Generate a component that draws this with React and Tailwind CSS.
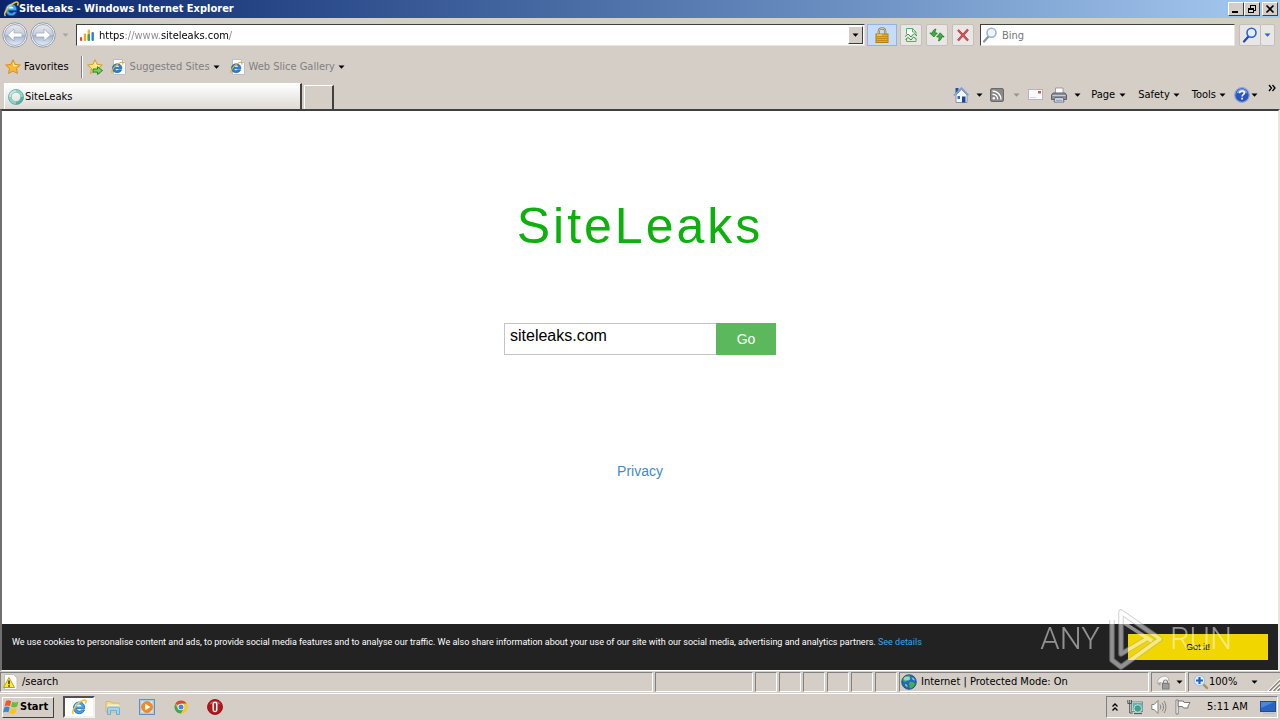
import React, { useState } from 'react';

// ────────────────────────────────────────────────────────────
// Icons
// ────────────────────────────────────────────────────────────
const IeIcon = ({ className = 'w-4 h-4' }) => (
  <svg className={`${className} shrink-0`} viewBox="0 0 16 16">
    <path d="M13.6 9.6H5.6c.1 1.500 1.200 2.500 2.700 2.500 1 0 1.800-.4 2.300-1.200h3c-.8 2.300-2.800 3.800-5.400 3.800-3.300 0-5.700-2.300-5.700-5.600C2.500 5.500 4.800 3 8.100 3c3.600 0 5.900 2.600 5.500 6.600z" fill="#3fa3ea" stroke="#1457a8" strokeWidth=".7" />
    <path d="M5.600 7.600h5c-.1-1.300-1.100-2.200-2.500-2.200s-2.300.9-2.500 2.200z" fill="#e8f5ff" />
    <path d="M2.500 15C.5 13.500 2.800 8.300 7 4.600 10.500 1.500 14 .3 14.900 1.600c.4.800.1 2-.5 3.100" fill="none" stroke="#f2c230" strokeWidth="1.500" />
    <path d="M4.200 7c.6-1.900 2-3 4-3.200" stroke="#b4e6ff" strokeWidth="1" fill="none" />
  </svg>
);

const IePageIcon = () => (
  <svg className="w-4 h-4 shrink-0" viewBox="0 0 16 16">
    <path d="M2.500.5h9l3 3v12h-12z" fill="#fff" stroke="#b6bfca" />
    <path d="M11.500.5v3h3" fill="#dfe8f2" stroke="#b6bfca" />
    <path d="M11 9.700H4c.1 1.200.9 1.800 1.900 1.800.8 0 1.300-.3 1.700-.8h3.100c-.6 1.800-2.200 3-4.700 3-2.700 0-4.600-1.800-4.600-4.500s1.900-4.500 4.600-4.500c3 0 5.200 2 5 5z" fill="#2481d8" stroke="#134f9c" strokeWidth=".5" />
    <path d="M4.200 7.800h3.900c-.1-.9-.8-1.400-1.900-1.400s-1.800.5-2 1.400z" fill="#fff" />
    <path d="M1.200 14C0 12.500 2.500 8.200 5.800 5.700 8.500 3.600 11.300 2.500 11.900 3.600c.2.500 0 1-.3 1.800" fill="none" stroke="#e0b020" strokeWidth="1.200" />
  </svg>
);

const StarIcon = ({ add }) => (
  <svg className="w-4 h-4 shrink-0" viewBox="0 0 16 16">
    <path
      d="M8 .8l2.200 4.600 5.100.6-3.800 3.500 1 5L8 12l-4.500 2.500 1-5L.7 6l5.100-.6z"
      fill={add ? '#fbe27a' : '#fdb92d'}
      stroke={add ? '#c79a22' : '#d08a1c'}
      strokeWidth=".9"
    />
    <path d="M8 2.800l1.500 3.300 3.300.5-3 1L8 7z" fill="#fff0a8" />
    {add && <path d="M6 10h4.500V7.700l5 3.800-5 4v-2.400H6z" fill="#6fd64f" stroke="#237d1c" strokeWidth=".9" />}
  </svg>
);

const NavArrow = ({ flip }) => (
  <svg className="w-[26px] h-[26px]" viewBox="0 0 26 26">
    <defs>
      <linearGradient id={flip ? 'navF' : 'navB'} x1="0" y1="0" x2="0" y2="1">
        <stop offset="0" stopColor="#e6eaf0" />
        <stop offset=".48" stopColor="#c6cedb" />
        <stop offset=".52" stopColor="#a4b2c8" />
        <stop offset="1" stopColor="#e4eefa" />
      </linearGradient>
    </defs>
    <circle cx="13" cy="13" r="12.200" fill="#f6f8fb" stroke="#8992a0" strokeWidth=".9" />
    <circle cx="13" cy="13" r="10.500" fill={flip ? 'url(#navF)' : 'url(#navB)'} stroke="#8f9cb2" strokeWidth=".8" />
    <g transform={flip ? 'matrix(-1 0 0 1 26 0)' : undefined}>
      <path d="M5.500 13l6.500-6v4h8v4h-8v4z" fill="#fff" stroke="#98a6bc" strokeWidth=".7" />
    </g>
  </svg>
);

const Caret = ({ color = '#000' }) => (
  <svg className="w-[7px] h-1 shrink-0" viewBox="0 0 7 4">
    <path d="M.5.500h6L3.500 3.700z" fill={color} />
  </svg>
);

const BarsIcon = () => (
  <svg className="w-4 h-4 shrink-0" viewBox="0 0 16 16">
    <rect x="1" y="10" width="2.200" height="4" rx="1" fill="#e8452c" />
    <rect x="4.800" y="6.500" width="2.400" height="7.500" rx="1" fill="#f5a81c" />
    <rect x="8.600" y="2.500" width="2.400" height="11.500" rx="1" fill="#f0b52a" />
    <rect x="8.600" y="7" width="2.400" height="7" rx="1" fill="#3ba352" />
    <rect x="12.500" y="5" width="2.400" height="9" rx="1" fill="#2e7be0" />
  </svg>
);

const LockIcon = () => (
  <svg className="w-4 h-4" viewBox="0 0 16 16">
    <path d="M4.800 8V4.500C4.800 2.300 6 1.300 8 1.300s3.200 1 3.200 3.200V8" fill="none" stroke="#8b7c50" strokeWidth="2.200" />
    <path d="M4.800 8V4.500C4.800 2.300 6 1.300 8 1.300s3.200 1 3.200 3.200V8" fill="none" stroke="#e4d9b4" strokeWidth=".9" />
    <rect x="2" y="7" width="12" height="8.500" fill="#e9ab1f" stroke="#b07c14" />
    <path d="M2.500 9.500h11M2.500 11.500h11M2.500 13.500h11" stroke="#bd8716" strokeWidth=".9" />
    <path d="M3 8h5" stroke="#ffe083" />
  </svg>
);

const CompatIcon = () => (
  <svg className="w-4 h-4" viewBox="0 0 16 16" fill="none">
    <path d="M3.500 7V1.500h6l3.500 3.500v3" fill="#fff" stroke="#5aae5f" />
    <path d="M9.500 1.500V5H13M3.500 12v2.500H13V12" stroke="#5aae5f" />
    <path d="M2 9.500L5 7l3 3 3-3.500 3 2.500M2.500 12.500l2.500-2 3 2.500L10.500 10l3 2" stroke="#3a9342" />
  </svg>
);

const RefreshIcon = () => (
  <svg className="w-4 h-4" viewBox="0 0 16 16">
    <path d="M7 2C4.500 2.500 3.500 4 3.500 6H.8l4 4 3.600-4H6c0-1.500.3-2.600 1-4z" fill="#3fae3b" stroke="#1f7421" strokeWidth=".7" />
    <path d="M9.500 14c2.200-.6 3.100-2 3.100-4h2.600l-4-4.200L7.600 10h2.500c0 1.500-.2 2.700-.6 4z" fill="#3fae3b" stroke="#1f7421" strokeWidth=".7" />
  </svg>
);

const StopIcon = () => (
  <svg className="w-4 h-4" viewBox="0 0 16 16">
    <path d="M3 3l10 10.500M13 2.500L3 13.500" stroke="#9c2f35" strokeWidth="2.200" />
    <path d="M3 3l10 10.500M13 2.500L3 13.500" stroke="#dd5358" strokeWidth="1.200" />
  </svg>
);

const SearchIcon = ({ ring, handle, fill }) => (
  <svg className="w-4 h-4 shrink-0" viewBox="0 0 16 16">
    <path d="M6.500 9.500L2 14.500" stroke={handle} strokeWidth="2.200" strokeLinecap="round" />
    <circle cx="9.500" cy="5.800" r="4.500" fill={fill} stroke={ring} strokeWidth="1.600" />
  </svg>
);

const HomeIcon = () => (
  <svg className="w-4 h-4" viewBox="0 0 16 16">
    <rect x="2.500" y="1" width="3" height="5" fill="#294f9c" />
    <path d="M3 8l5.500-5.500L14 8v7.500H3z" fill="#f3f6fb" stroke="#6f83a8" strokeWidth=".8" />
    <path d="M.8 8.500L8.500 1l7 7.300" fill="none" stroke="#7e9fce" strokeWidth="1.600" />
    <rect x="9" y="9.500" width="3.500" height="6" fill="#1f4690" />
    <rect x="4.500" y="9" width="2.500" height="3" fill="#3d67ad" />
  </svg>
);

const RssIcon = () => (
  <svg className="w-[14px] h-[14px]" viewBox="0 0 14 14">
    <rect x=".5" y=".5" width="13" height="13" rx="1.500" fill="#8b8987" stroke="#6d6b69" />
    <circle cx="3.800" cy="10.300" r="1.300" fill="#fff" />
    <path d="M2.500 6.300c3 0 5.200 2.200 5.200 5.200M2.500 3c4.800 0 8.500 3.700 8.500 8.500" fill="none" stroke="#fff" strokeWidth="1.400" />
  </svg>
);

const MailIcon = () => (
  <svg className="w-[15px] h-[11px]" viewBox="0 0 15 11">
    <rect x=".5" y=".5" width="14" height="10" fill="#fafafa" stroke="#b9b4b4" />
    <path d="M2 8.500h6" stroke="#d4d4dc" />
    <rect x="10" y="2" width="3" height="2.500" fill="#d05a68" />
  </svg>
);

const PrinterIcon = () => (
  <svg className="w-4 h-4" viewBox="0 0 16 16">
    <path d="M4.500 1h7.500v6h-7.500z" fill="#fff" stroke="#8b8b92" strokeWidth=".8" />
    <path d="M2 6h12l1.500 2v4.500H.5V8z" fill="#8c8f97" stroke="#5d6068" />
    <path d="M1.500 8.500h13" stroke="#c9ccd3" />
    <path d="M4 10.500h8l1 4.500H3z" fill="#f5f8ff" stroke="#555862" strokeWidth=".8" />
    <path d="M4.500 12h7M4.500 13.500h7" stroke="#5d83c4" strokeWidth=".7" />
  </svg>
);

const HelpIcon = () => (
  <svg className="w-4 h-4" viewBox="0 0 16 16">
    <circle cx="8" cy="8" r="7.300" fill="#2858bd" stroke="#93a6cf" strokeWidth="1.200" />
    <path d="M2.500 6.500a5.600 5.600 0 0 1 11 0C10 5 6 5 2.500 6.500z" fill="#7fa4ea" />
    <path d="M5.600 6.200C5.700 4.600 6.700 4 8 4s2.400.7 2.400 2c0 1.700-2.300 1.700-2.300 3.400M8.100 10.800v1.700" fill="none" stroke="#fff" strokeWidth="1.600" />
  </svg>
);

const SpinnerIcon = () => (
  <svg className="w-4 h-4 shrink-0" viewBox="0 0 16 16" fill="none">
    <circle cx="8" cy="8" r="6.200" stroke="#8ed2ca" strokeWidth="2.800" />
    <path d="M8 1.800a6.200 6.200 0 0 0-6.200 6.200" stroke="#c4e9e4" strokeWidth="2.800" />
    <path d="M14.200 8A6.200 6.200 0 0 1 8 14.200" stroke="#4fb5a8" strokeWidth="2.800" />
    <circle cx="8" cy="8" r="7.500" stroke="#4d9f99" strokeWidth=".7" />
    <circle cx="8" cy="8" r="4.700" stroke="#5fa9a3" strokeWidth=".5" />
  </svg>
);

const WarningIcon = () => (
  <svg className="w-4 h-4 shrink-0" viewBox="0 0 16 16">
    <path d="M2.500.5h9l3.500 3.500v11.500H2.500z" fill="#fff" stroke="#c4c0bb" />
    <path d="M7 3.500l5.500 10h-11z" fill="#ffe92c" stroke="#b39b00" strokeWidth=".9" strokeLinejoin="round" />
    <path d="M7 6.500v3.700M7 11.200v1.500" stroke="#222" strokeWidth="1.400" />
  </svg>
);

const GlobeIcon = () => (
  <svg className="w-4 h-4 shrink-0" viewBox="0 0 16 16">
    <circle cx="8" cy="8" r="7.300" fill="#2468bd" stroke="#1c4680" strokeWidth=".8" />
    <path d="M2 4.500C4 2 7 1 9 1.500c1 1-1 2-.5 3.500C7 6.500 5 6 4.500 8 3 8.500 1.500 7 2 4.500zM8.500 8c2-.8 4 0 5.500 1.500-.5 2.500-2.500 4.500-4.500 5-1.500-1.500-.5-3-1.500-4.500z" fill="#3fb24a" />
    <path d="M10.500 3.500c1.500 0 3 1 3.500 3-1.500 0-3-1-3.500-3zM4 10c1.500 0 2.500 1 2.500 3C5 12.500 4 11.500 4 10z" fill="#8fdc7c" />
    <ellipse cx="6" cy="4.500" rx="3.200" ry="2" fill="#d6f1ff" opacity=".6" />
  </svg>
);

const ProtectIcon = () => (
  <svg className="w-4 h-4" viewBox="0 0 16 16">
    <path d="M1 9c1-4 4-7 8-7 2 0 4 2 4 5" fill="#f4f4f4" stroke="#b0adab" />
    <path d="M1 9l4-1-1 4z" fill="#a5a5a5" />
    <path d="M7.500 9.500V8a2 2 0 0 1 4 0v1.500" fill="none" stroke="#858585" strokeWidth="1.200" />
    <rect x="6.500" y="9.500" width="6.500" height="5.500" fill="#9c9c9c" stroke="#7b7b7b" />
  </svg>
);

const ZoomIcon = () => (
  <svg className="w-4 h-4" viewBox="0 0 16 16">
    <path d="M10 10l4 4" stroke="#b98b4a" strokeWidth="2.400" strokeLinecap="round" />
    <circle cx="6.500" cy="6.500" r="5.200" fill="#e5f1ff" stroke="#a3c6ee" strokeWidth="1.200" />
    <path d="M6.500 3v7M3 6.500h7" stroke="#2561c4" strokeWidth="2.200" />
  </svg>
);

const GripIcon = () => (
  <svg className="w-3 h-3 self-end shrink-0" viewBox="0 0 12 12">
    <path d="M0 12L12 0M4 12l8-8M8 12l4-4" stroke="#fff" strokeWidth="1.200" />
    <path d="M1.500 12L12 1.500M5.500 12L12 5.500M9.500 12l2.500-2.500" stroke="#8a857f" strokeWidth="1.400" />
  </svg>
);

const WindowsIcon = () => (
  <svg className="w-4 h-4 shrink-0" viewBox="0 0 16 16">
    <path d="M3 2C5 .8 6.500 1.200 8.200 2.200L7 7.200C5.300 6.200 3.500 6.100 1.600 7.200z" fill="#ee5a24" />
    <path d="M9.200 2.700c1.900 1 3.800 1.200 6.300-.1L14.100 7.600c-2 1.300-4.200 1.100-6.100.1z" fill="#6dbb3a" />
    <path d="M1.300 8.400c2-1.100 3.700-1 5.400 0L5.400 13.400C3.800 12.400 2 12.400 0 13.500z" fill="#3a84dc" />
    <path d="M7.700 8.900c1.900.9 3.900 1.100 6.100-.1L12.400 14c-2.200 1.200-4.200 1.100-6 .1z" fill="#fcc419" />
  </svg>
);

const ExplorerIcon = () => (
  <svg className="w-4 h-4" viewBox="0 0 16 16">
    <path d="M1 2.500h5l1 1.500h7v9H1z" fill="#f2d98a" stroke="#d2b160" strokeWidth=".8" />
    <path d="M2.500 5.500h12V12h-12z" fill="#fbf1c0" />
    <path d="M2.500 15.500V9.500c0-1 .5-1.500 1.500-1.500h9c1 0 1.500.5 1.500 1.500v6h-3v-4h-6v4z" fill="#9ed3f2" stroke="#5ea2d0" strokeWidth=".8" />
  </svg>
);

const MediaIcon = () => (
  <svg className="w-4 h-4" viewBox="0 0 16 16">
    <rect x=".5" y=".5" width="15" height="15" fill="#b8d7f4" stroke="#5c90c6" />
    <rect x="2" y="2" width="12" height="12" fill="#e4f0fb" stroke="#86b2dc" strokeWidth=".6" />
    <circle cx="8" cy="8" r="5.500" fill="#f68a1c" stroke="#e8740c" strokeWidth=".6" />
    <path d="M6.200 4.800v6.400L11.500 8z" fill="#fff" />
  </svg>
);

const ChromeIcon = () => (
  <svg className="w-4 h-4" viewBox="0 0 16 16">
    <circle cx="8" cy="8" r="6.500" fill="#f7c928" />
    <path d="M8 8L2.370 4.750A6.500 6.500 0 0 1 13.630 4.750H8z" fill="#e0443a" />
    <path d="M2.370 4.750A6.500 6.500 0 0 0 8 14.500l3-4.700L8 8 5 9.800z" fill="#3da851" />
    <path d="M8 4.750h5.630A6.500 6.500 0 0 1 8 14.500l3-4.700z" fill="#f7c928" />
    <circle cx="8" cy="8" r="3.300" fill="#fff" />
    <circle cx="8" cy="8" r="2.500" fill="#4583ec" />
  </svg>
);

const OperaIcon = () => (
  <svg className="w-4 h-4" viewBox="0 0 16 16">
    <circle cx="8" cy="8" r="7.500" fill="#b5161b" stroke="#7d0c10" strokeWidth=".8" />
    <path d="M2.500 5.500a6 6 0 0 1 11 0C10 4 6 4 2.500 5.500z" fill="#e0585c" />
    <rect x="5.500" y="2.800" width="5" height="10.400" rx="2.400" fill="#fff" />
    <rect x="7.100" y="4" width="1.800" height="8" rx=".9" fill="#a01318" />
  </svg>
);

const NetworkIcon = () => (
  <svg className="w-4 h-4" viewBox="0 0 16 16">
    <rect x="5" y="3.500" width="10.500" height="8.500" fill="#5fb3ac" stroke="#f2f2f2" />
    <rect x="4.500" y="3" width="11.200" height="9.500" fill="none" stroke="#55656a" strokeWidth=".7" />
    <path d="M7 14.500h8" stroke="#4d5d60" strokeWidth="1.300" />
    <path d="M.8 1v3.500h3.700V1M2.700 1v3M2.700 4.500V14h3" fill="none" stroke="#4c5a57" strokeWidth="1" />
    <circle cx="10.800" cy="9.500" r="3.800" fill="#3fa08e" stroke="#d7f0e9" strokeWidth=".8" />
  </svg>
);

const SpeakerIcon = () => (
  <svg className="w-4 h-4" viewBox="0 0 16 16" fill="none" stroke="#85817d">
    <path d="M.8 5.500h2.400L7 1.500v13l-3.800-4H.8z" fill="#fff" />
    <path d="M9 5.500c1 1.500 1 3.500 0 5M11 3.800c2 2.500 2 6 0 8.400M13 2c2.500 3.500 2.500 8.500 0 12" />
  </svg>
);

const FlagIcon = () => (
  <svg className="w-4 h-4" viewBox="0 0 16 16">
    <path d="M1 1h2.200v14H1z" fill="#fff" stroke="#6c6966" strokeWidth=".8" />
    <path d="M3.200 2h5l1 1.500h5.800L13 7v2H8.500l-1-1.500H3.200z" fill="#fff" stroke="#6c6966" strokeWidth=".9" />
  </svg>
);

const DesktopIcon = () => (
  <svg className="w-4 h-4" viewBox="0 0 16 16">
    <rect x=".5" y="2.500" width="15" height="10" fill="#2764c4" stroke="#234a90" />
    <path d="M1 3h13L1 9z" fill="#4c86dc" />
    <path d="M3 14.500h12" stroke="#aebfd8" strokeWidth="1.500" />
  </svg>
);

const Chevrons = ({ up }) => (
  <svg className="w-2 h-2 shrink-0" viewBox="0 0 8 8" fill="none" stroke="#000" strokeWidth="1.300">
    {up ? <path d="M1.500 3.500L4 1l2.500 2.500M1.500 7.500L4 5l2.500 2.500" /> : <path d="M1 1l2.500 3L1 7M4.500 1L7 4 4.500 7" />}
  </svg>
);

// ────────────────────────────────────────────────────────────
// Window chrome
// ────────────────────────────────────────────────────────────
const captionBtn =
  'w-4 h-[14px] flex items-center justify-center bg-[#d5cec6] border border-t-white border-l-white border-r-[#404040] border-b-[#404040]';

const TitleBar = () => (
  <header className="h-[18px] flex items-center pl-[3px] pr-[2px] bg-linear-to-r from-[#0a246a] to-[#a6caf0]">
    <IeIcon />
    <h1 className="flex-1 text-[11px] leading-4 font-bold text-white">SiteLeaks - Windows Internet Explorer</h1>
    <div className="flex">
      <button className={captionBtn} aria-label="Minimize">
        <svg className="w-[10px] h-[10px]" viewBox="0 0 10 10"><path d="M1 7h6v2H1z" /></svg>
      </button>
      <button className={captionBtn} aria-label="Restore">
        <svg className="w-[10px] h-[10px]" viewBox="0 0 10 10" fill="none" stroke="#000" shapeRendering="crispEdges">
          <path d="M3.500 3.500v-2h5v5h-2M3 1.500h6M1.500 4.500h5v4h-5zM1 5.500h6" />
        </svg>
      </button>
      <button className={`${captionBtn} ml-0.5`} aria-label="Close">
        <svg className="w-[10px] h-[10px]" viewBox="0 0 10 10" stroke="#000" strokeWidth="1.700"><path d="M1.500 1.500l7 7M8.500 1.500l-7 7" /></svg>
      </button>
    </div>
  </header>
);

const toolBtn = 'h-[22px] flex items-center justify-center bg-[#e9e7e6] border border-[#c3bfbb] rounded-xs';

const NavBar = () => {
  const [url, setUrl] = useState('https://www.siteleaks.com/');
  const [query, setQuery] = useState('');

  return (
    <div className="h-[34px] flex items-center pl-0.5 pr-[5px]">
      <button aria-label="Back"><NavArrow /></button>
      <button className="ml-0.5" aria-label="Forward"><NavArrow flip /></button>
      <button className="ml-[6px] mr-[7px]" aria-label="Recent pages"><Caret color="#aaa49d" /></button>
      <div className="flex-1 h-[22px] flex items-center gap-1 pl-0.5 pr-px bg-white border border-t-[#404040] border-l-[#404040] border-r-[#e8e4df] border-b-[#e8e4df]">
        <BarsIcon />
        <input
          className="flex-1 min-w-0 pt-0.5 text-transparent caret-black bg-clip-text bg-[linear-gradient(90deg,#000_26px,#888_26px,#888_62px,#000_62px,#000_130px,#888_130px)] outline-none"
          aria-label="Address"
          value={url}
          onChange={(e) => setUrl(e.target.value)}
        />
        <button
          className="w-[15px] h-[18px] flex items-center justify-center bg-[#d5cec6] border border-t-white border-l-white border-r-[#404040] border-b-[#404040]"
          aria-label="Show address history"
        >
          <Caret />
        </button>
      </div>
      <button className="ml-0.5 w-[30px] h-[22px] flex items-center justify-center bg-[#c5dcfb] border border-[#8fb3e6]" aria-label="Security report">
        <LockIcon />
      </button>
      <div className="flex gap-1 ml-[3px]">
        <button className={`${toolBtn} w-[22px]`} aria-label="Compatibility view"><CompatIcon /></button>
        <button className={`${toolBtn} w-[22px]`} aria-label="Refresh"><RefreshIcon /></button>
        <button className={`${toolBtn} w-[22px]`} aria-label="Stop"><StopIcon /></button>
      </div>
      <div className="w-[255px] h-[22px] ml-[6px] flex items-center gap-1 pl-px bg-white border border-t-[#404040] border-l-[#404040] border-r-[#e8e4df] border-b-[#e8e4df]">
        <SearchIcon ring="#9fb4cb" handle="#8b97a6" fill="#eef5fc" />
        <input
          className="flex-1 min-w-0 pt-0.5 placeholder:text-[#777] outline-none"
          aria-label="Search"
          placeholder="Bing"
          value={query}
          onChange={(e) => setQuery(e.target.value)}
        />
      </div>
      <div className="flex ml-1">
        <button className={`${toolBtn} w-[22px]`} aria-label="Run search">
          <SearchIcon ring="#2f62c8" handle="#1d4bae" fill="#e3eefc" />
        </button>
        <button className={`${toolBtn} w-[14px] border-l-0`} aria-label="Search options"><Caret color="#2f62c8" /></button>
      </div>
    </div>
  );
};

const FavoritesBar = () => (
  <div className="h-[30px] flex items-center pl-[5px]">
    <button className="flex items-center gap-[3px]"><StarIcon />Favorites</button>
    <span className="w-0.5 h-[22px] ml-3 mr-1 border-l border-l-[#808080] bg-white" />
    <button aria-label="Add to Favorites Bar"><StarIcon add /></button>
    <button className="flex items-center gap-[3px] ml-2 text-[#808080]">
      <IePageIcon />Suggested Sites<Caret />
    </button>
    <button className="flex items-center gap-[3px] ml-2.5 text-[#808080]">
      <IePageIcon />Web Slice Gallery<Caret />
    </button>
  </div>
);

const TabBar = () => (
  <div className="h-[27px] flex items-end pl-1">
    <button className="w-[298px] h-[26px] flex items-center gap-px pl-[3px] bg-linear-to-b from-white to-[#dedad5] border-l border-t border-white border-r-2 border-r-[#404040]">
      <SpinnerIcon />SiteLeaks
    </button>
    <button
      className="w-[30px] h-6 ml-0.5 border-l border-t border-l-white border-t-white border-r-2 border-r-[#404040]"
      aria-label="New tab"
    />
    <nav className="flex-1 h-full flex items-center justify-end pr-1 pb-0.5">
      <button className="flex items-center gap-[7px]" aria-label="Home"><HomeIcon /><Caret /></button>
      <button className="flex items-center gap-[9px] ml-[7px]" aria-label="Feeds"><RssIcon /><Caret color="#97918a" /></button>
      <button className="ml-2" aria-label="Read mail"><MailIcon /></button>
      <button className="flex items-center gap-[7px] ml-2" aria-label="Print"><PrinterIcon /><Caret /></button>
      <button className="flex items-center gap-1 ml-2.5">Page<Caret /></button>
      <button className="flex items-center gap-[3px] ml-3">Safety<Caret /></button>
      <button className="flex items-center gap-[3px] ml-3">Tools<Caret /></button>
      <button className="flex items-center gap-px ml-2" aria-label="Help"><HelpIcon /><Caret /></button>
      <button className="self-start mt-0.5 ml-2.5" aria-label="More commands"><Chevrons /></button>
    </nav>
  </div>
);

// ────────────────────────────────────────────────────────────
// Page inside the browser
// ────────────────────────────────────────────────────────────
const Watermark = () => (
  <div className="absolute right-[46px] bottom-0 h-[62px] flex items-center gap-[6px] opacity-50 pointer-events-none text-white text-[31px] leading-[62px] font-light font-['Roboto','Liberation_Sans',sans-serif]">
    <span>ANY</span>
    <svg className="w-[58px] h-[62px]" viewBox="0 0 58 62" fill="none" strokeLinejoin="round">
      <g stroke="#a8a8a8" strokeWidth="5.500">
        <path d="M6 12V52L15 59 54 31 15 4V46L42 30" />
      </g>
      <g stroke="#fff" strokeWidth="3.500">
        <path d="M6 12V52L15 59 54 31 15 4V46L42 30" />
        <path d="M18 15l28 18" />
      </g>
    </svg>
    <span>RUN</span>
  </div>
);

const CookieBar = () => (
  <div className="relative h-[46px] flex items-start justify-between px-2.5 bg-[#222] text-white text-[9px] leading-4">
    <p className="pt-2.5 font-['Roboto','Noto_Sans',sans-serif]">
      We use cookies to personalise content and ads, to provide social media features and to analyse our traffic. We also
      share information about your use of our site with our social media, advertising and analytics partners.{' '}
      <a href="#details" className="text-[#31a8f0]">See details</a>
    </p>
    <button className="w-[140px] h-[26px] mt-2.5 shrink-0 bg-[#f1d600] text-black">Got it!</button>
    <Watermark />
  </div>
);

const SitePage = () => {
  const [site, setSite] = useState('siteleaks.com');

  return (
    <main className="flex-1 flex flex-col bg-white border-t-2 border-l-2 border-t-[#404040] border-l-[#707070] border-r-2 border-r-[#e8e4df] border-b border-b-white font-['Liberation_Sans',Arial,sans-serif]">
      <div className="flex-1 flex flex-col items-center pt-[85px]">
        <h2 className="text-[50px] leading-[60px] tracking-[3px] text-[#0cb10c]">SiteLeaks</h2>
        <form className="flex mt-[67px]" onSubmit={(e) => e.preventDefault()}>
          <input
            className="w-[212px] h-8 px-[5px] pb-1.5 text-base text-black border border-r-0 border-[#c4c4c4] outline-none"
            aria-label="Site"
            value={site}
            onChange={(e) => setSite(e.target.value)}
          />
          <button className="w-[60px] h-8 bg-[#5cb85c] text-white text-sm">Go</button>
        </form>
        <a href="#privacy" className="mt-[106px] text-sm text-[#428bca]">Privacy</a>
      </div>
      <CookieBar />
    </main>
  );
};

// ────────────────────────────────────────────────────────────
// Status bar + taskbar
// ────────────────────────────────────────────────────────────
const pane = 'h-5 flex items-center border border-t-[#808080] border-l-[#808080] border-r-white border-b-white';

const StatusBar = () => (
  <footer className="h-[23px] flex items-center gap-0.5 border-b border-white">
    <div className={`${pane} flex-1 gap-1 pl-px`}><WarningIcon />/search</div>
    <div className={`${pane} w-[98px]`} />
    {[0, 1, 2, 3, 4, 5].map((i) => (
      <div key={i} className={`${pane} w-[22px]`} />
    ))}
    <div className={`${pane} w-[250px] gap-1 pl-px`}><GlobeIcon />Internet | Protected Mode: On</div>
    <button className={`${pane} w-[35px] gap-1 pl-1`} aria-label="Protected mode"><ProtectIcon /><Caret /></button>
    <div className={`${pane} w-[92px] pl-1 border-r-0`}>
      <button className="flex-1 flex items-center" aria-label="Zoom level">
        <ZoomIcon />
        <span className="flex-1 text-left">100%</span>
        <Caret />
      </button>
      <span className="w-[10px]" />
      <GripIcon />
    </div>
  </footer>
);

const Taskbar = () => (
  <footer className="h-[26px] flex items-center pl-0.5 pr-0.5">
    <button className="w-[52px] h-[21px] flex items-center gap-px text-[11px] font-bold bg-[#d5cec6] border border-t-white border-l-white border-r-[#404040] border-b-[#404040]">
      <WindowsIcon />Start
    </button>
    <button
      className="w-8 h-[22px] ml-[9px] flex items-center justify-center bg-white border-2 border-t-[#505050] border-l-[#505050] border-r-[#f4f2f0] border-b-[#f4f2f0]"
      aria-label="Internet Explorer"
    >
      <IeIcon />
    </button>
    <div className="flex items-center gap-[18px] ml-2.5">
      <button aria-label="Windows Explorer"><ExplorerIcon /></button>
      <button aria-label="Media Player"><MediaIcon /></button>
      <button aria-label="Chrome"><ChromeIcon /></button>
      <button aria-label="Opera"><OperaIcon /></button>
    </div>
    <div className={`${pane} w-[172px] h-[22px] ml-auto gap-2 pl-1 pr-px`}>
      <button aria-label="Show hidden icons"><Chevrons up /></button>
      <NetworkIcon />
      <SpeakerIcon />
      <FlagIcon />
      <time className="flex-1 pl-2">5:11 AM</time>
      <button aria-label="Show desktop"><DesktopIcon /></button>
    </div>
  </footer>
);

export default function App() {
  return (
    <div className="min-h-screen flex flex-col bg-[#d5cec6] text-black text-[11px] leading-4 whitespace-nowrap font-['DejaVu_Sans_Condensed','Noto_Sans',sans-serif]">
      <TitleBar />
      <NavBar />
      <FavoritesBar />
      <TabBar />
      <SitePage />
      <StatusBar />
      <Taskbar />
    </div>
  );
}
